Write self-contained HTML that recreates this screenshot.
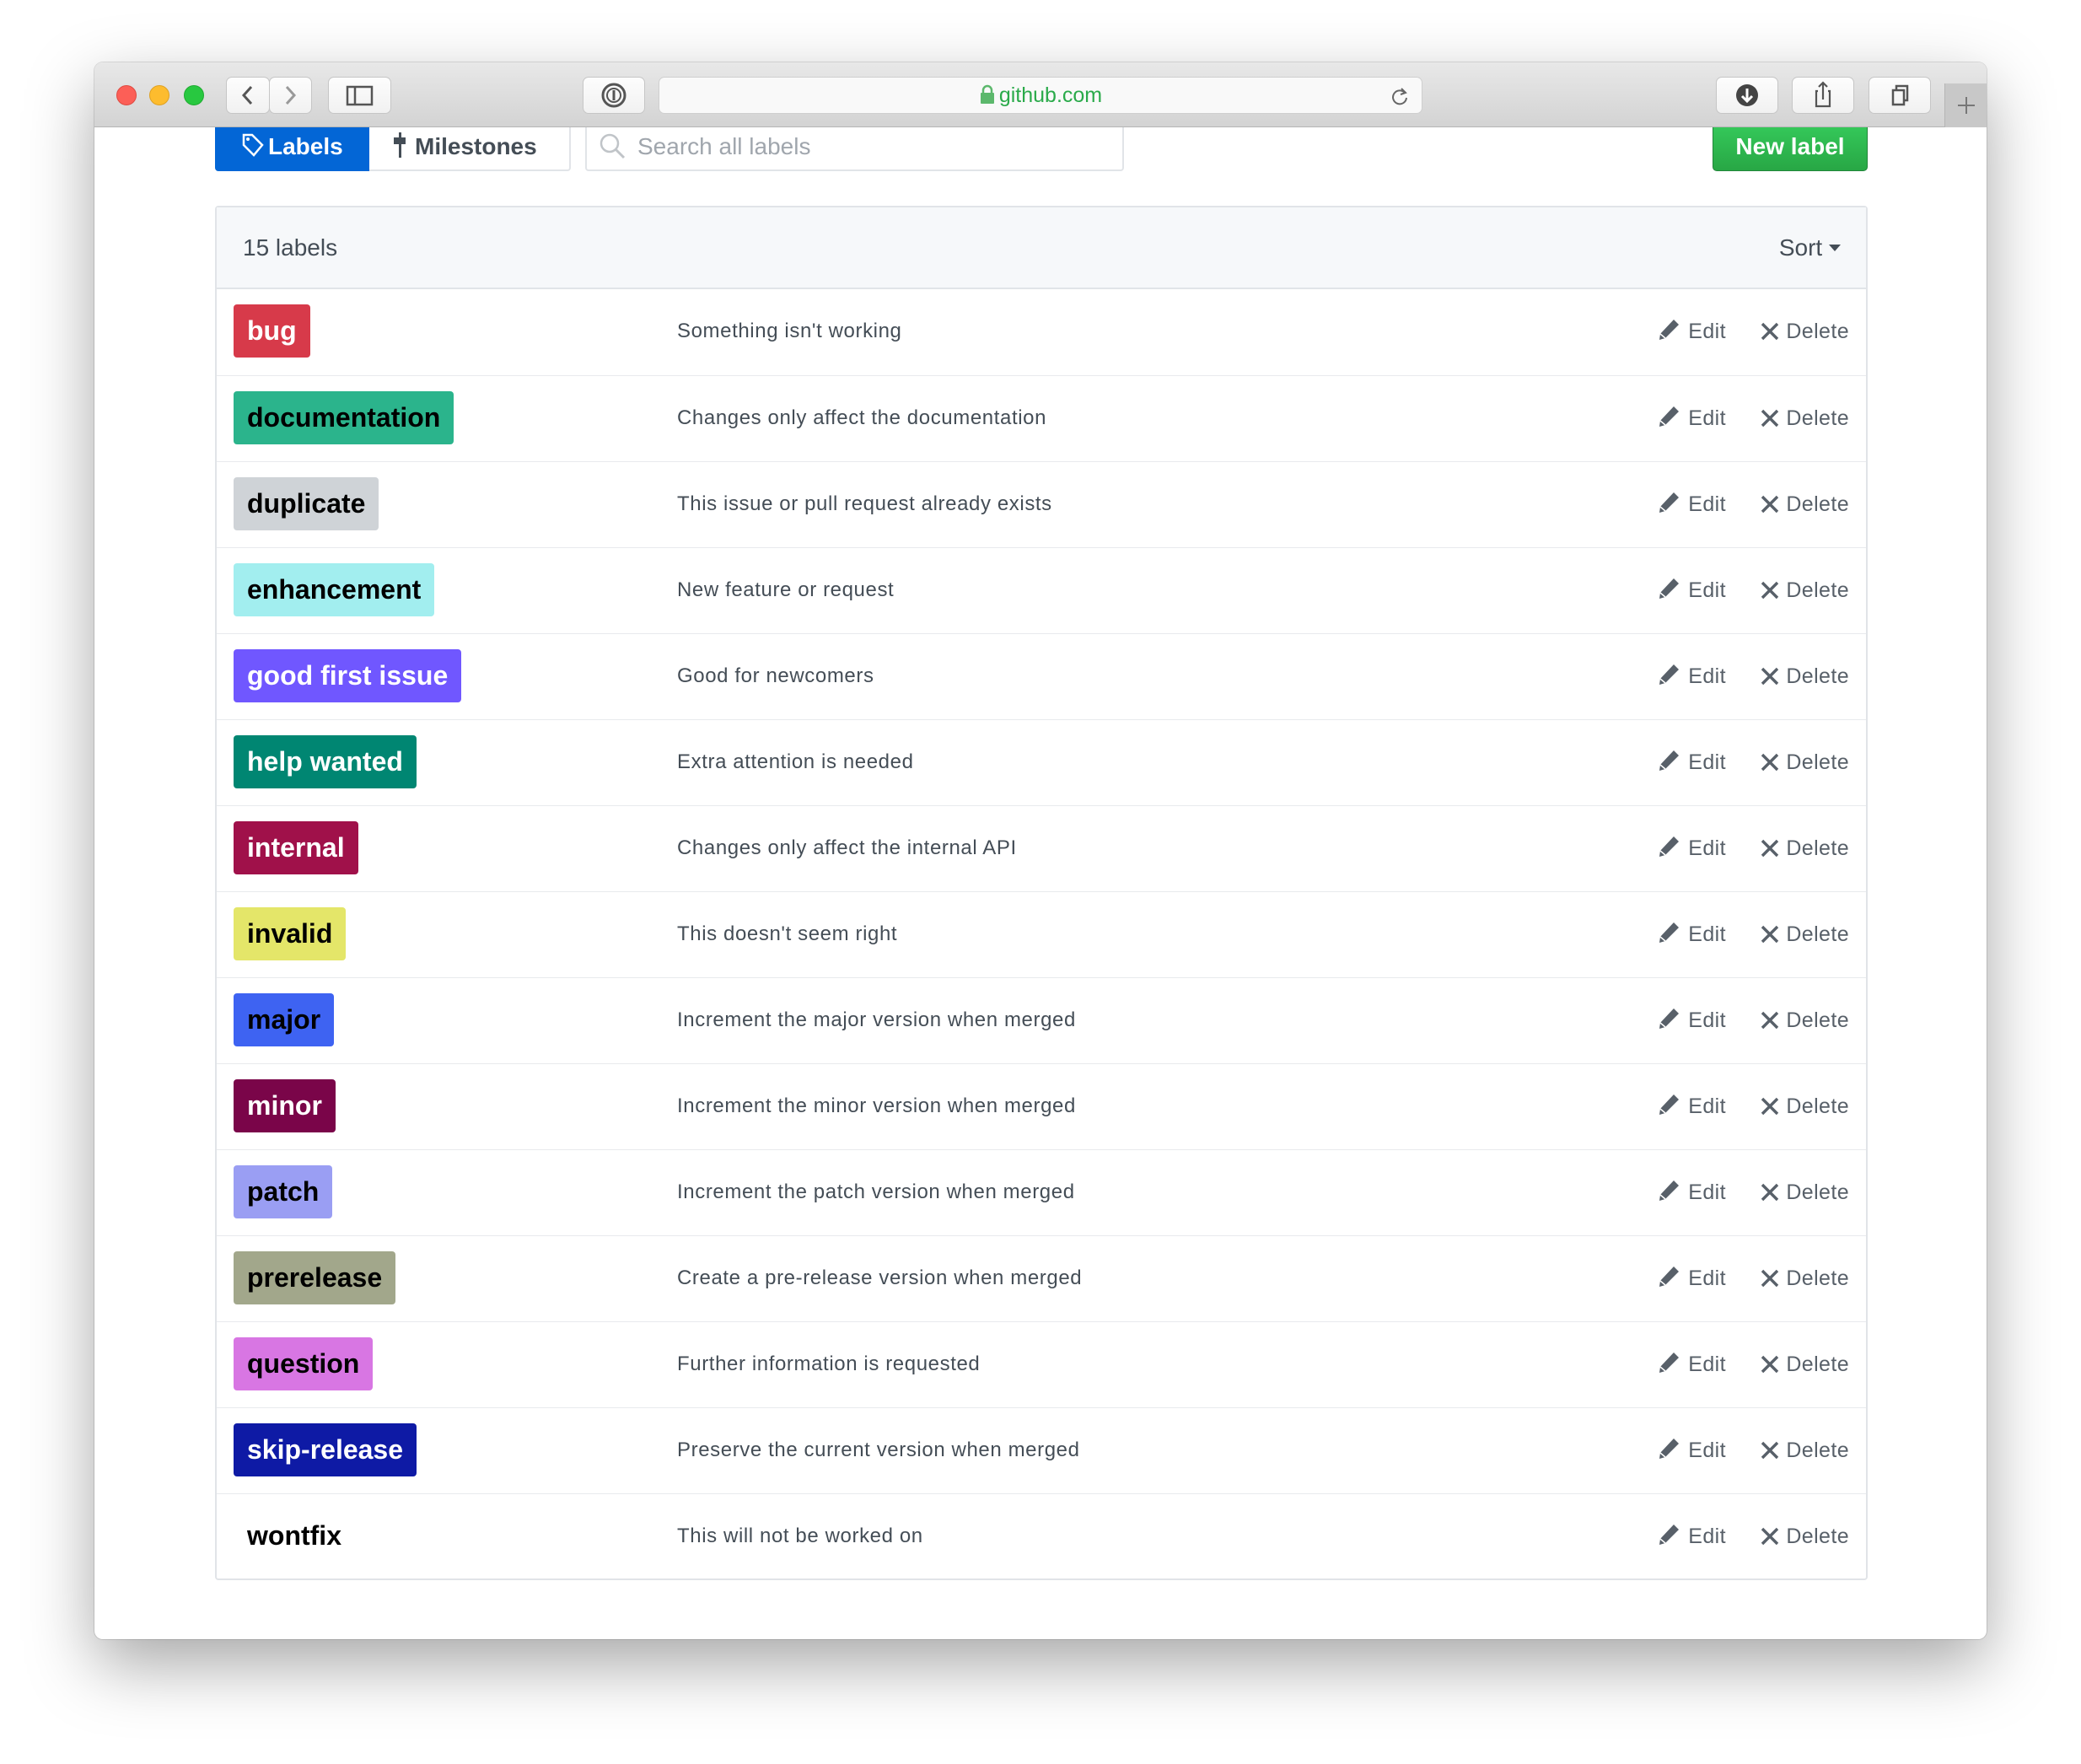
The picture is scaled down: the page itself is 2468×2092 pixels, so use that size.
<!DOCTYPE html>
<html><head><meta charset="utf-8"><style>
*{box-sizing:border-box;margin:0;padding:0}
body{width:2468px;height:2092px;background:#fff;font-family:"Liberation Sans",sans-serif;position:relative;overflow:hidden}
.win{position:absolute;left:112px;top:74px;width:2244px;height:1870px;background:#fff;border-radius:10px;box-shadow:0 30px 80px rgba(0,0,0,.35),0 0 0 1px rgba(0,0,0,.12);overflow:hidden}
.bar{position:absolute;left:0;top:0;width:100%;height:77px;background:linear-gradient(#e8e8e8,#d3d3d3);border-bottom:1px solid #b5b5b5}
.dot{position:absolute;top:27px;width:24px;height:24px;border-radius:50%}
.btn{position:absolute;top:17px;height:44px;background:linear-gradient(#fdfdfd,#f1f1f1);border:1px solid #c6c6c6;border-radius:7px;color:#555}
.url{position:absolute;left:669px;top:17px;width:906px;height:44px;background:#f9f9f9;border:1px solid #cfcfcf;border-radius:7px;text-align:center;font-size:25px;line-height:42px;color:#2aaa4a}
.tab{position:absolute;top:77px;height:52px;font-size:28px;font-weight:bold;line-height:46px}
.box{position:absolute;left:143px;top:170px;width:1960px;height:1630px;border:2px solid #e1e4e8;border-radius:4px}
.hdr{height:97px;background:#f6f8fa;border-bottom:2px solid #e1e4e8;font-size:28px;color:#444d56;line-height:95px;padding-left:31px;position:relative}
.row{height:102px;border-top:1px solid #e8eaed;position:relative}
.row:first-of-type{border-top:0}
.lab{position:absolute;left:20px;top:18px;height:63px;padding:0 16px;border-radius:4px;font-size:32px;font-weight:bold;line-height:63px}
.desc{position:absolute;left:546px;top:0;line-height:100px;font-size:24px;color:#444d56;letter-spacing:0.6px}
.act{position:absolute;right:20px;top:0;line-height:100px;font-size:25px;color:#586069;letter-spacing:0.4px}
.act svg{vertical-align:-4px}
</style></head><body>
<div class="win">
<div class="bar">
<div class="dot" style="left:26px;background:#fc5f57;border:1px solid #de4a41"></div>
<div class="dot" style="left:65px;background:#fdbc2e;border:1px solid #dea123"></div>
<div class="dot" style="left:106px;background:#28c840;border:1px solid #1fab31"></div>
<div class="btn" style="left:156px;width:52px"><svg width="50" height="42"><path d="M29 11 L20 21 L29 31" fill="none" stroke="#555" stroke-width="3"/></svg></div>
<div class="btn" style="left:207px;width:51px"><svg width="50" height="42"><path d="M20 11 L29 21 L20 31" fill="none" stroke="#999" stroke-width="3"/></svg></div>
<div class="btn" style="left:277px;width:75px"><svg width="73" height="42"><rect x="22" y="11" width="29" height="21" fill="none" stroke="#555" stroke-width="2.5"/><line x1="31" y1="11" x2="31" y2="32" stroke="#555" stroke-width="2.5"/></svg></div>
<div class="btn" style="left:579px;width:74px"><svg width="72" height="42"><circle cx="36" cy="21" r="13" fill="none" stroke="#555" stroke-width="3"/><circle cx="36" cy="21" r="8" fill="none" stroke="#555" stroke-width="2"/><rect x="34.5" y="15" width="3" height="12" fill="#555"/></svg></div>
<div class="url"><svg width="20" height="24" style="vertical-align:-3px;margin-right:4px"><path d="M5 11 V7 A5 5 0 0 1 15 7 V11" fill="none" stroke="#5cb86c" stroke-width="2.5"/><rect x="2" y="10" width="16" height="13" rx="1" fill="#5cb86c"/></svg>github.com<svg style="position:absolute;right:14px;top:10px" width="24" height="24"><path d="M18 8 A8 8 0 1 0 20 14" fill="none" stroke="#666" stroke-width="2"/><path d="M14 3 L19 8 L13 10" fill="none" stroke="#666" stroke-width="2"/></svg></div>
<div class="btn" style="left:1923px;width:74px"><svg width="72" height="42"><circle cx="36" cy="21" r="13" fill="#444"/><path d="M36 13 V28 M30 22 L36 28 L42 22" stroke="#fff" stroke-width="3" fill="none"/></svg></div>
<div class="btn" style="left:2013px;width:74px"><svg width="72" height="42"><path d="M30 16 H28 V34 H44 V16 H42 M36 26 V6 M31 11 L36 6 L41 11" fill="none" stroke="#555" stroke-width="2.2"/></svg></div>
<div class="btn" style="left:2104px;width:74px"><svg width="72" height="42"><rect x="28" y="15" width="13" height="17" fill="none" stroke="#555" stroke-width="2.5"/><path d="M32 15 V10 H45 V27 H41" fill="none" stroke="#555" stroke-width="2.5"/></svg></div>
<div style="position:absolute;left:2194px;top:25px;width:50px;height:52px;background:#c8c8c8;border-left:1px solid #b5b5b5"><svg width="50" height="52"><path d="M25 16 V36 M15 26 H35" stroke="#777" stroke-width="2"/></svg></div>
</div>
<div class="tab" style="left:143px;width:183px;background:#0366d6;color:#fff;border-radius:0 0 0 4px;padding-left:31px"><svg width="32" height="30" style="vertical-align:-4px"><path d="M3 3 H13 L25 15 L15 27 L3 15 Z" fill="none" stroke="#fff" stroke-width="2.5"/><circle cx="8" cy="8" r="2" fill="#fff"/></svg>Labels</div>
<div class="tab" style="left:326px;width:239px;border:2px solid #e1e4e8;border-top:0;border-left:0;border-radius:0 0 4px 0;color:#444d56;padding-left:26px;height:52px"><svg width="28" height="30" style="vertical-align:-4px"><rect x="3" y="6" width="14" height="8" fill="#444d56"/><rect x="9" y="0" width="3" height="30" fill="#444d56"/></svg>Milestones</div>
<div class="tab" style="left:582px;width:639px;border:2px solid #e1e4e8;border-top:0;border-radius:0 0 4px 4px;font-weight:normal;color:#a0a6ad;padding-left:60px;height:52px"><svg width="34" height="34" style="position:absolute;left:14px;top:6px"><circle cx="13" cy="13" r="10" fill="none" stroke="#c0c4c8" stroke-width="2.5"/><path d="M20 20 L30 30" stroke="#c0c4c8" stroke-width="3"/></svg>Search all labels</div>
<div class="tab" style="left:1919px;width:184px;background:linear-gradient(#34c759,#28a745);color:#fff;border:1px solid #22863a;border-top:0;border-radius:0 0 5px 5px;text-align:center">New label</div>
<div class="box">
<div class="hdr">15 labels<span style="position:absolute;right:30px;top:0">Sort <svg width="14" height="10" style="vertical-align:3px"><path d="M0 0 H14 L7 8 Z" fill="#444d56"/></svg></span></div>
<div id="rows"></div>
</div>
</div>
<script>
var L=[["bug","#d73a4a","#fff","Something isn't working"],["documentation","#2bb48c","#000","Changes only affect the documentation"],["duplicate","#cfd3d7","#000","This issue or pull request already exists"],["enhancement","#a2eeef","#000","New feature or request"],["good first issue","#7057ff","#fff","Good for newcomers"],["help wanted","#008672","#fff","Extra attention is needed"],["internal","#a0114a","#fff","Changes only affect the internal API"],["invalid","#e4e669","#000","This doesn't seem right"],["major","#3e63f2","#000","Increment the major version when merged"],["minor","#7a0549","#fff","Increment the minor version when merged"],["patch","#9a9ef3","#000","Increment the patch version when merged"],["prerelease","#a2a78b","#000","Create a pre-release version when merged"],["question","#d876e3","#000","Further information is requested"],["skip-release","#0e1aa5","#fff","Preserve the current version when merged"],["wontfix","#ffffff","#000","This will not be worked on"]];
var h="";L.forEach(function(l){h+='<div class="row"><div class="lab" style="background:'+l[1]+';color:'+l[2]+'">'+l[0]+'</div><div class="desc">'+l[3]+'</div><div class="act"><svg width="30" height="30"><path d="M3 28 L4 21 L20 4 L26 10 L10 26 Z" fill="#586069"/><path d="M4 21 L10 26" stroke="#fff" stroke-width="1.5"/></svg>&nbsp;Edit<span style="display:inline-block;width:40px"></span><svg width="24" height="24"><path d="M3 3 L21 21 M21 3 L3 21" stroke="#586069" stroke-width="3.4"/></svg>&nbsp;Delete</div></div>'});
document.getElementById("rows").innerHTML=h;
</script>
</body></html>
